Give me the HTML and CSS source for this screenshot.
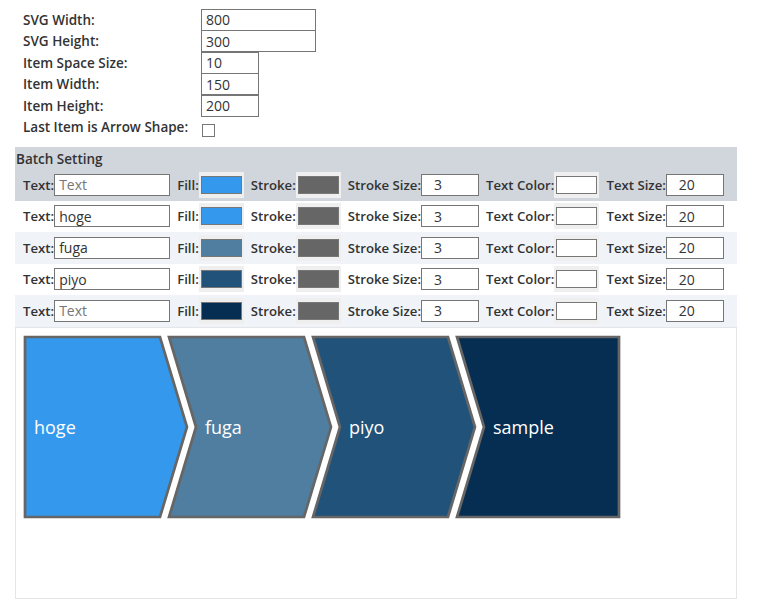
FILE: index.html
```html
<!DOCTYPE html>
<html lang="en">
<head>
  <meta charset="UTF-8">
  <title>Arrow Flow Generator</title>
  <meta name="viewport" content="width=device-width, initial-scale=1">
  <link rel="stylesheet" href="styles.css">
</head>
<body>
  <div class="page">
    <form class="settings">
      <label class="settings-label" for="svg-width">SVG Width:</label>
      <input type="text" id="svg-width" class="field field-wide" value="800">
      <label class="settings-label" for="svg-height">SVG Height:</label>
      <input type="text" id="svg-height" class="field field-wide" value="300">
      <label class="settings-label" for="space-size">Item Space Size:</label>
      <input type="text" id="space-size" class="field field-short" value="10">
      <label class="settings-label" for="item-width">Item Width:</label>
      <input type="text" id="item-width" class="field field-short" value="150">
      <label class="settings-label" for="item-height">Item Height:</label>
      <input type="text" id="item-height" class="field field-short" value="200">
      <label class="settings-label" for="last-arrow">Last Item is Arrow Shape:</label>
      <input type="checkbox" id="last-arrow" class="check">
    </form>

    <div class="batch">
      <div class="batch-title">Batch Setting</div>
      <div class="item-row">
        <label class="pair">Text:<input type="text" class="field field-text" placeholder="Text"></label>
        <label class="pair">Fill:<span class="swatch"><span class="swatch-color" style="background:#3498ec"></span></span></label>
        <label class="pair">Stroke:<span class="swatch"><span class="swatch-color" style="background:#666666"></span></span></label>
        <label class="pair">Stroke Size:<input type="text" class="field field-num" value="3"></label>
        <label class="pair">Text Color:<span class="swatch"><span class="swatch-color" style="background:#ffffff"></span></span></label>
        <label class="pair">Text Size:<input type="text" class="field field-num" value="20"></label>
      </div>
    </div>

    <div class="item-row">
      <label class="pair">Text:<input type="text" class="field field-text" value="hoge"></label>
      <label class="pair">Fill:<span class="swatch"><span class="swatch-color" style="background:#3498ec"></span></span></label>
      <label class="pair">Stroke:<span class="swatch"><span class="swatch-color" style="background:#666666"></span></span></label>
      <label class="pair">Stroke Size:<input type="text" class="field field-num" value="3"></label>
      <label class="pair">Text Color:<span class="swatch"><span class="swatch-color" style="background:#ffffff"></span></span></label>
      <label class="pair">Text Size:<input type="text" class="field field-num" value="20"></label>
    </div>
    <div class="item-row">
      <label class="pair">Text:<input type="text" class="field field-text" value="fuga"></label>
      <label class="pair">Fill:<span class="swatch"><span class="swatch-color" style="background:#4f7ea1"></span></span></label>
      <label class="pair">Stroke:<span class="swatch"><span class="swatch-color" style="background:#666666"></span></span></label>
      <label class="pair">Stroke Size:<input type="text" class="field field-num" value="3"></label>
      <label class="pair">Text Color:<span class="swatch"><span class="swatch-color" style="background:#ffffff"></span></span></label>
      <label class="pair">Text Size:<input type="text" class="field field-num" value="20"></label>
    </div>
    <div class="item-row">
      <label class="pair">Text:<input type="text" class="field field-text" value="piyo"></label>
      <label class="pair">Fill:<span class="swatch"><span class="swatch-color" style="background:#215279"></span></span></label>
      <label class="pair">Stroke:<span class="swatch"><span class="swatch-color" style="background:#666666"></span></span></label>
      <label class="pair">Stroke Size:<input type="text" class="field field-num" value="3"></label>
      <label class="pair">Text Color:<span class="swatch"><span class="swatch-color" style="background:#ffffff"></span></span></label>
      <label class="pair">Text Size:<input type="text" class="field field-num" value="20"></label>
    </div>
    <div class="item-row">
      <label class="pair">Text:<input type="text" class="field field-text" placeholder="Text"></label>
      <label class="pair">Fill:<span class="swatch"><span class="swatch-color" style="background:#062e53"></span></span></label>
      <label class="pair">Stroke:<span class="swatch"><span class="swatch-color" style="background:#666666"></span></span></label>
      <label class="pair">Stroke Size:<input type="text" class="field field-num" value="3"></label>
      <label class="pair">Text Color:<span class="swatch"><span class="swatch-color" style="background:#ffffff"></span></span></label>
      <label class="pair">Text Size:<input type="text" class="field field-num" value="20"></label>
    </div>

    <div class="preview">
      <svg class="preview-svg" viewBox="0 0 800 300" width="720" height="270">
        <g stroke="#666666" stroke-width="3">
          <polygon points="10,10 160,10 190,110 160,210 10,210" fill="#3498ec"/>
          <polygon points="170,10 320,10 350,110 320,210 170,210 200,110" fill="#4f7ea1"/>
          <polygon points="330,10 480,10 510,110 480,210 330,210 360,110" fill="#215279"/>
          <polygon points="490,10 670,10 670,210 490,210 520,110" fill="#062e53"/>
        </g>
        <g class="item-label" fill="#ffffff" font-size="20">
          <text x="20" y="112">hoge</text>
          <text x="210" y="112">fuga</text>
          <text x="370" y="112">piyo</text>
          <text x="530" y="112">sample</text>
        </g>
      </svg>
    </div>
  </div>
</body>
</html>
```

FILE: styles.css
```css
* {
  box-sizing: border-box;
}
body {
  margin: 0;
  background: #ffffff;
  color: #333333;
  font-family: 'Open Sans', 'Noto Sans', sans-serif;
  font-size: 13.5px;
}
.page {
  width: 722px;
  margin-left: 15px;
  padding-top: 9px;
}

/* top settings */
.settings {
  display: grid;
  grid-template-columns: 178px auto;
  grid-auto-rows: 21.5px;
  align-items: center;
  justify-items: start;
  padding-left: 8px;
  margin: 0 0 9px;
}
.settings-label {
  font-weight: 600;
}
.field {
  height: 22px;
  border: 1px solid #767676;
  border-radius: 0;
  padding: 0 4px;
  font-family: inherit;
  font-size: 14px;
  color: #333333;
  background: #ffffff;
  margin: 0;
}
.field::placeholder {
  color: #777777;
}
.field-wide {
  width: 115px;
}
.field-short {
  width: 58px;
}
.check {
  appearance: none;
  width: 13px;
  height: 13px;
  margin: 6px 0 0 1px;
  border: 1px solid #767676;
  background: #ffffff;
}

/* batch + item rows */
.batch {
  background: #d1d5dc;
}
.batch-title {
  font-weight: 600;
  height: 22px;
  padding: 3px 0 0 1px;
  line-height: 18px;
}
.item-row {
  display: flex;
  align-items: center;
  gap: 7px;
  height: 31.5px;
  padding-left: 8px;
  font-size: 13.2px;
}
.item-row:nth-of-type(odd) {
  background: #f0f4f9;
}
.pair {
  display: flex;
  align-items: center;
  font-weight: 600;
}
.field-text {
  width: 116px;
}
.field-num {
  width: 58px;
  padding-left: 12px;
}
.swatch {
  display: block;
  width: 45px;
  height: 26px;
  padding: 4px 2px;
  background: #efefef;
}
.swatch-color {
  display: block;
  height: 100%;
  border: 1px solid #777777;
}

/* preview */
.preview {
  border: 1px solid #e3e5e8;
  height: 272px;
}
.preview-svg {
  display: block;
}
.item-label text {
  font-family: 'Open Sans', 'Noto Sans', sans-serif;
  dominant-baseline: middle;
}
```
